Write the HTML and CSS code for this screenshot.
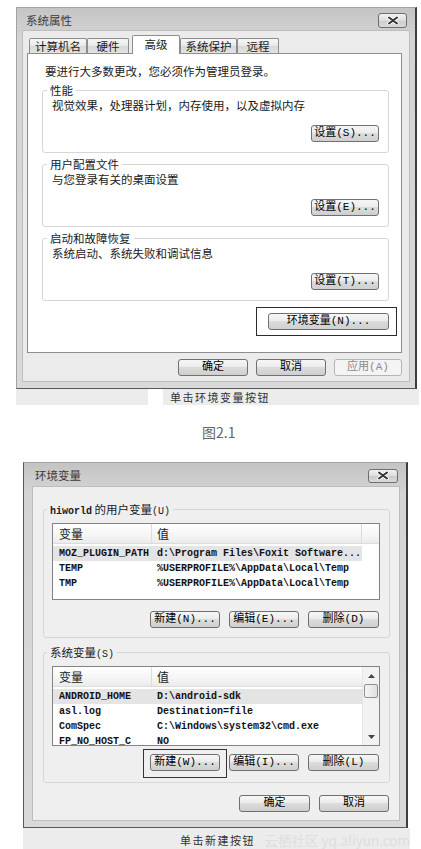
FILE: index.html
```html
<!DOCTYPE html>
<html lang="zh-CN">

<head>
    <meta charset="UTF-8">
    <meta name="viewport" content="width=device-width, initial-scale=1.0">
    <title>系统属性 / 环境变量</title>

    <link rel="stylesheet" href="styles.css">
</head>

<body>
    <div class="fig fig1">
        <div class="window win1">
            <div class="titlebar">
                <span class="title">系统属性</span>
                <span class="close"><svg width="12" height="9" viewBox="0 0 12 9"><path d="M2 1.5L10 7.5M10 1.5L2 7.5" stroke="#fff" stroke-width="3.6" stroke-linecap="round"/><path d="M2 1.5L10 7.5M10 1.5L2 7.5" stroke="#333" stroke-width="2" stroke-linecap="round"/></svg></span>
            </div>
            <div class="client">
                <div class="tabs">
                    <div class="tab t1">计算机名</div>
                    <div class="tab t2">硬件</div>
                    <div class="tab sel">高级</div>
                    <div class="tab t4">系统保护</div>
                    <div class="tab t5">远程</div>
                </div>
                <div class="panel">
                    <p class="intro">要进行大多数更改，您必须作为管理员登录。</p>

                    <div class="group">
                        <div class="legend">性能</div>
                        <p>视觉效果，处理器计划，内存使用，以及虚拟内存</p>
                        <div class="btnrow"><button class="btn set">设置(S)...</button></div>
                    </div>

                    <div class="group">
                        <div class="legend">用户配置文件</div>
                        <p>与您登录有关的桌面设置</p>
                        <div class="btnrow"><button class="btn set">设置(E)...</button></div>
                    </div>

                    <div class="group">
                        <div class="legend">启动和故障恢复</div>
                        <p>系统启动、系统失败和调试信息</p>
                        <div class="btnrow"><button class="btn set">设置(T)...</button></div>
                    </div>

                    <div class="envrow">
                        <div class="mark"><button class="btn env">环境变量(N)...</button></div>
                    </div>
                </div>
                <div class="actions">
                    <button class="btn w70">确定</button>
                    <button class="btn w70">取消</button>
                    <button class="btn w68 off">应用(A)</button>
                </div>
            </div>
        </div>
        <div class="caption cap1">
            <span class="blank"></span>
            <span class="note">单击环境变量按钮</span>
        </div>
    </div>

    <div class="figno">图2.1</div>

    <div class="fig fig2">
        <div class="window win2">
            <div class="titlebar">
                <span class="title">环境变量</span>
                <span class="close"><svg width="12" height="9" viewBox="0 0 12 9"><path d="M2 1.5L10 7.5M10 1.5L2 7.5" stroke="#fff" stroke-width="3.6" stroke-linecap="round"/><path d="M2 1.5L10 7.5M10 1.5L2 7.5" stroke="#333" stroke-width="2" stroke-linecap="round"/></svg></span>
            </div>
            <div class="client">
                <div class="group">
                    <div class="legend"><b class="mono">hiworld</b> 的用户变量<span class="mono">(U)</span></div>
                    <div class="list">
                        <div class="cols">
                            <div class="lh three"><span>变量</span><span>值</span><span></span></div>
                            <div class="rows">
                                <div class="row sel"><span>MOZ_PLUGIN_PATH</span><span>d:\Program Files\Foxit Software...</span></div>
                                <div class="row"><span>TEMP</span><span>%USERPROFILE%\AppData\Local\Temp</span></div>
                                <div class="row"><span>TMP</span><span>%USERPROFILE%\AppData\Local\Temp</span></div>
                            </div>
                        </div>
                    </div>
                    <div class="btnrow">
                        <button class="btn w70">新建(N)...</button>
                        <button class="btn w70">编辑(E)...</button>
                        <button class="btn w71">删除(D)</button>
                    </div>
                </div>

                <div class="group g2">
                    <div class="legend">系统变量<span class="mono">(S)</span></div>
                    <div class="list">
                        <div class="cols">
                            <div class="lh"><span>变量</span><span>值</span></div>
                            <div class="rows">
                                <div class="row sel"><span>ANDROID_HOME</span><span>D:\android-sdk</span></div>
                                <div class="row"><span>asl.log</span><span>Destination=file</span></div>
                                <div class="row"><span>ComSpec</span><span>C:\Windows\system32\cmd.exe</span></div>
                                <div class="row"><span>FP_NO_HOST_C</span><span>NO</span></div>
                            </div>
                        </div>
                        <div class="sb">
                            <div class="arr"><svg width="7" height="4" viewBox="0 0 7 4"><path d="M0 4L3.5 0L7 4Z" fill="#444"/></svg></div>
                            <div class="thumb"></div>
                            <div class="track"></div>
                            <div class="arr"><svg width="7" height="4" viewBox="0 0 7 4"><path d="M0 0L3.5 4L7 0Z" fill="#444"/></svg></div>
                        </div>
                    </div>
                    <div class="btnrow tight">
                        <span class="hl"><button class="btn w70">新建(W)...</button></span>
                        <button class="btn w70">编辑(I)...</button>
                        <button class="btn w71">删除(L)</button>
                    </div>
                </div>

                <div class="actions ok">
                    <button class="btn w71">确定</button>
                    <button class="btn w70">取消</button>
                </div>
            </div>
        </div>
        <div class="caption cap2">
            <span class="note">单击新建按钮</span>
            <span class="wm">云栖社区 yq.aliyun.com</span>
        </div>
    </div>
</body>

</html>
```

FILE: styles.css
```css
body {
    margin: 0;
    width: 421px;
    background: #ffffff;
    font-family: "Noto Sans CJK SC", sans-serif;
    font-size: 11.5px;
    line-height: 15px;
    color: #1a1a1a;
}

p {
    margin: 0;
}

.mono {
    font-family: "Liberation Mono", monospace;
    font-size: 10px;
}

.fig1 {
    width: 403px;
    margin: 7px 0 0 16px;
}

.fig2 {
    width: 387px;
    margin: 20px 0 0 23px;
}

/* window frame */

.window {
    box-sizing: border-box;
    border: 1px solid #a3a3a3;
    border-right: 2px solid #3d3d3d;
    border-bottom-color: #585858;
    background: linear-gradient(#c4c4c4, #d4d4d4 30px, #d9d9d9);
}

.win1 {
    width: 401px;
    padding: 0 5px 6px 5px;
}

.win2 {
    width: 385px;
    padding: 0 6px 6px 8px;
    border-left-color: #5a5a5a;
}

.titlebar {
    box-sizing: border-box;
    display: flex;
    align-items: center;
    height: 22px;
    padding: 2px 3px 0 4px;
}

.win2 .titlebar {
    height: 23px;
    padding: 2px 2px 0 3px;
}

.title {
    color: #3a3a3a;
}

.close {
    margin-left: auto;
    box-sizing: border-box;
    width: 29px;
    height: 15px;
    border: 1px solid #6e6e6e;
    border-radius: 3px;
    background: linear-gradient(#f0f0f0, #dddddd 50%, #cbcbcb 51%, #dadada);
    display: flex;
    align-items: center;
    justify-content: center;
}

.win2 .close {
    width: 30px;
    height: 14px;
}

.client {
    background: #ebebeb;
    border: 1px solid #bdbdbd;
}

.win1 .client {
    padding: 4px 7px 5px 4px;
}

.win2 .client {
    background: #efefef;
    padding: 22px 9px 8px 10px;
}

/* tabs */

.tabs {
    position: relative;
    z-index: 1;
    display: flex;
    align-items: flex-end;
    height: 18px;
    margin-left: 2px;
}

.tab {
    box-sizing: border-box;
    height: 15px;
    border: 1px solid #8d8d8d;
    border-bottom: 0;
    border-radius: 2px 2px 0 0;
    background: linear-gradient(#f7f7f7, #e8e8e8 50%, #d8d8d8 51%, #e3e3e3);
    text-align: center;
    line-height: 14px;
}

.t1 { width: 58px; }
.t2 { width: 42px; }
.t4 { width: 57px; }
.t5 { width: 42px; }

.tab.sel {
    width: 48px;
    height: 19px;
    margin: 0 0 -1px 3px;
    background: #ffffff;
    line-height: 16px;
}

.panel {
    box-sizing: border-box;
    height: 300px;
    background: #ffffff;
    border: 1px solid #8e8e8e;
    padding: 10px 12px 0 14px;
}

.intro {
    padding-left: 3px;
}

/* group boxes */

.group {
    border: 1px solid #d6d6d6;
    border-radius: 3px;
    margin-top: 11px;
    padding: 0 9px 10px 9px;
}

.legend {
    width: max-content;
    margin: -8px 0 0 -5px;
    padding: 0 3px;
    background: #ffffff;
}

.btnrow {
    display: flex;
    justify-content: flex-end;
    margin-top: 12px;
}

.envrow {
    display: flex;
    justify-content: flex-end;
    margin: 6px -8px 0 0;
}

.mark {
    border: 1px solid #2b2b2b;
    padding: 4px 7px 5px 11px;
}

/* buttons */

.btn {
    box-sizing: border-box;
    height: 17px;
    padding: 0;
    border: 1px solid #707070;
    border-radius: 3px;
    background: linear-gradient(#f6f6f6, #ececec 45%, #dcdcdc 50%, #cfcfcf);
    font-family: "Liberation Mono", "Noto Sans CJK SC", monospace;
    font-size: 11px;
    line-height: 15px;
    color: #000000;
    white-space: nowrap;
}

.btn.set { width: 68px; }
.btn.env { width: 121px; }
.btn.w68 { width: 68px; }
.btn.w70 { width: 70px; }
.btn.w71 { width: 71px; }

.btn.off {
    border-color: #b5b5b5;
    background: #f4f4f4;
    color: #8a8a8a;
}

.actions {
    display: flex;
    justify-content: flex-end;
    gap: 8px;
    margin-top: 6px;
}

/* captions */

.caption {
    display: flex;
    align-items: center;
    background: #ececec;
}

.cap1 {
    height: 16px;
}

.cap2 {
    height: 25px;
}

.blank {
    width: 15px;
    height: 16px;
    margin-left: 132px;
    background: #ffffff;
}

.note {
    margin-left: 7px;
    font-size: 11px;
    letter-spacing: 1.5px;
    color: #333333;
}

.cap2 .note {
    margin-left: 157px;
}

.wm {
    margin-left: auto;
    font-size: 13.5px;
    color: #dedede;
}

.figno {
    margin-top: 17px;
    padding-left: 202px;
    font-size: 14px;
    line-height: 20px;
    color: #666666;
}

/* environment variables dialog */

.win2 .group {
    margin-top: 0;
    padding: 0 9px 9px 8px;
}

.win2 .legend {
    background: #efefef;
}

.win2 .group.g2 {
    margin-top: 14px;
    padding-bottom: 11px;
}

.list {
    box-sizing: border-box;
    display: flex;
    height: 77px;
    margin-top: 4px;
    border: 1px solid #838383;
    background: #ffffff;
    overflow: hidden;
}

.g2 .list {
    height: 80px;
}

.cols {
    flex: 1;
}

.lh {
    box-sizing: border-box;
    display: grid;
    grid-template-columns: 99px 210px;
    height: 20px;
    border-bottom: 1px solid #dcdcdc;
    background: linear-gradient(#ffffff, #f5f5f5 60%, #ebebeb);
    font-size: 12px;
    line-height: 19px;
}

.lh.three {
    grid-template-columns: 99px 210px 1fr;
}

.lh span {
    border-right: 1px solid #dcdcdc;
    padding-left: 6px;
}

.lh span:nth-child(2) {
    padding-left: 5px;
}

.lh span:last-child {
    border-right: 0;
}

.rows {
    padding-top: 2px;
}

.row {
    display: grid;
    grid-template-columns: 99px 210px;
    width: 309px;
    height: 15px;
    font: bold 10px/15px "Liberation Mono", monospace;
    color: #111111;
    white-space: nowrap;
}

.row span {
    padding-left: 6px;
    overflow: hidden;
}

.row span + span {
    padding-left: 5px;
}

.row.sel {
    background: #e4e4e4;
}

.sb {
    box-sizing: border-box;
    display: flex;
    flex-direction: column;
    width: 17px;
    border-left: 1px solid #e6e6e6;
    background: #f2f2f2;
}

.arr {
    height: 17px;
    display: flex;
    align-items: center;
    justify-content: center;
}

.thumb {
    box-sizing: border-box;
    height: 14px;
    margin: 0 1px;
    border: 1px solid #8f8f8f;
    border-radius: 2px;
    background: linear-gradient(90deg, #f6f6f6, #e0e0e0);
}

.track {
    flex: 1;
}

.win2 .btnrow {
    gap: 9px;
    margin: 11px 1px 0 0;
}

.win2 .btnrow.tight {
    margin-top: 8px;
}

/* annotation frame drawn round a button, outside the flow size */
.hl {
    display: flex;
    margin: -5px -7px -7px -7px;
    padding: 4px 6px 6px 6px;
    border: 1px solid #333333;
}

.actions.ok {
    gap: 9px;
    margin: 12px 1px 0 0;
}
```
